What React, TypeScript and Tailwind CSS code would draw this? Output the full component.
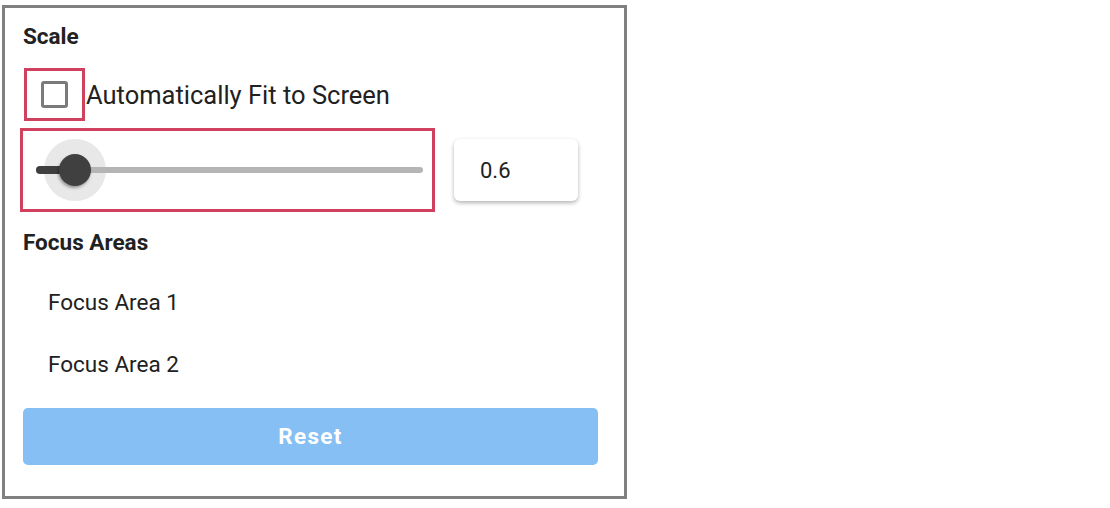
import React from 'react';

const font = { fontFamily: 'Roboto, "Liberation Sans", sans-serif' };

function ScaleSlider() {
  return (
    <div className="relative h-[32px] w-[387px]">
      {/* halo around the thumb */}
      <div className="absolute left-[8px] top-[-15px] h-[62px] w-[62px] rounded-full bg-[#e8e8e8]" />
      {/* inactive track */}
      <div className="absolute left-0 right-0 top-[13px] h-[6px] rounded-full bg-[#b5b5b5]" />
      {/* active track */}
      <div className="absolute left-0 top-[12px] h-[8px] w-[40px] rounded-l-full bg-[#3f3f3f]" />
      {/* thumb */}
      <div className="absolute left-[23px] top-0 h-[32px] w-[32px] rounded-full bg-[#404040] shadow-[-1px_2px_3px_rgba(0,0,0,0.35)]" />
    </div>
  );
}

export default function App() {
  return (
    <div className="bg-white min-h-[508px]" style={font}>
      <div className="ml-[2px] mt-[5px] h-[494px] w-[625px] border-[3px] border-[#808080] bg-white px-[18px] text-[#212121]">
        <h2 className="pt-[13px] text-[22.5px] font-bold leading-[30px]">Scale</h2>

        {/* Auto-fit toggle */}
        <div className="mt-[17px] flex items-center">
          <div className="ml-[1px] flex h-[53px] w-[61px] items-center justify-center border-[3px] border-[#d0415f]">
            <div className="h-[27px] w-[27px] rounded-[3px] border-[3px] border-[#7a7a7a]" />
          </div>
          <span className="ml-[1px] text-[25.5px] leading-[32px]">Automatically Fit to Screen</span>
        </div>

        {/* Slider + value */}
        <div className="mt-[7px] flex items-center">
          <div className="ml-[-3px] flex h-[84px] w-[415px] items-center border-[3px] border-[#d0415f] pl-[13px]">
            <ScaleSlider />
          </div>
          <div className="ml-[19px] flex h-[62px] w-[124px] items-center rounded-[6px] bg-white pl-[26px] text-[22px] shadow-[0_2px_4px_rgba(0,0,0,0.3)]">
            0.6
          </div>
        </div>

        <h2 className="mt-[15px] text-[22.5px] font-bold leading-[30px]">Focus Areas</h2>

        <div className="mt-[14px]">
          <div className="flex h-[62px] items-center pl-[25px] text-[22.5px] leading-[30px]">Focus Area 1</div>
          <div className="flex h-[62px] items-center pl-[25px] text-[22.5px] leading-[30px]">Focus Area 2</div>
        </div>

        <button className="mt-[13px] flex h-[57px] w-[575px] items-center justify-center rounded-[5px] bg-[#86bff3] text-[22.5px] font-bold tracking-[1.3px] text-white">
          Reset
        </button>
      </div>
    </div>
  );
}
